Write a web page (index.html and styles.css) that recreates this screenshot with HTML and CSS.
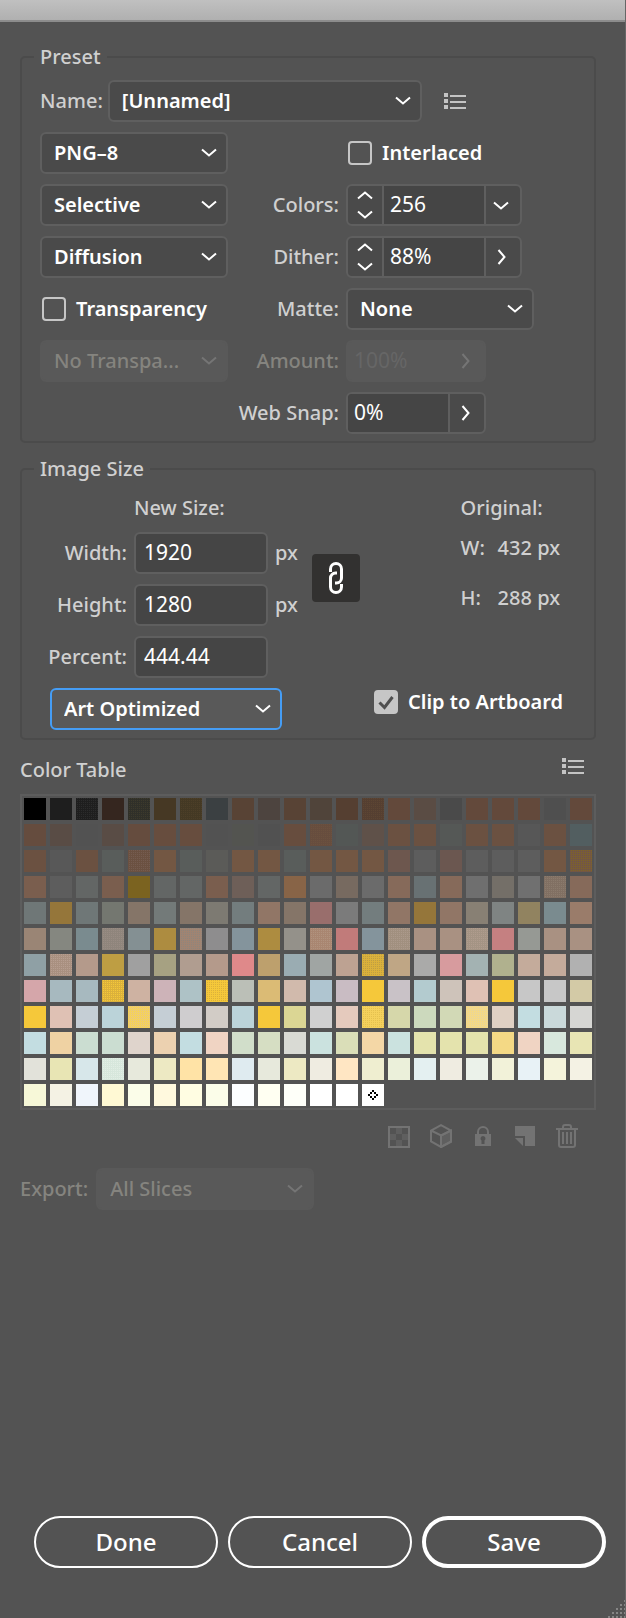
FILE: index.html
```html
<!DOCTYPE html>
<html lang="en">
<head>
<meta charset="utf-8">
<meta name="viewport" content="width=device-width, initial-scale=1">
<title>Save for Web</title>
<link rel="stylesheet" href="styles.css">
</head>
<body>
<svg class="defs" width="0" height="0" aria-hidden="true">
  <symbol id="down" viewBox="0 0 16 9"><path d="M1 1.5l7 6 7-6" fill="none" stroke="currentColor" stroke-width="2"/></symbol>
  <symbol id="up" viewBox="0 0 16 9"><path d="M1 7.5l7-6 7 6" fill="none" stroke="currentColor" stroke-width="2"/></symbol>
  <symbol id="right" viewBox="0 0 9 16"><path d="M1.500 1l6 7-6 7" fill="none" stroke="currentColor" stroke-width="2"/></symbol>
  <symbol id="list" viewBox="0 0 22 16"><path d="M0 0h4v4H0zM0 6h4v4H0zM0 12h4v4H0zM6 2h16v2H6zM6 8h16v2H6zM6 14h16v2H6z" fill="currentColor"/></symbol>
</svg>
<div class="titlebar"></div>
<main class="panel">
  <fieldset class="group preset">
    <legend>Preset</legend>
    <div class="name-row">
      <label for="name">Name:</label>
      <span class="select name-select"><select id="name"><option>[Unnamed]</option></select><svg class="chev"><use href="#down"/></svg></span>
      <button class="icon-btn" type="button" aria-label="Preset menu"><svg width="22" height="16"><use href="#list"/></svg></button>
    </div>
    <div class="preset-grid">
      <span class="select"><select aria-label="Format"><option>PNG–8</option></select><svg class="chev"><use href="#down"/></svg></span>
      <label class="check wide"><input type="checkbox"><span>Interlaced</span></label>

      <span class="select"><select aria-label="Color reduction"><option>Selective</option></select><svg class="chev"><use href="#down"/></svg></span>
      <label class="lbl" for="colors">Colors:</label>
      <div class="combo">
        <span class="stepper"><button type="button" aria-label="More colors"><svg width="16" height="9"><use href="#up"/></svg></button><button type="button" aria-label="Fewer colors"><svg width="16" height="9"><use href="#down"/></svg></button></span>
        <input id="colors" type="text" value="256">
        <button class="side" type="button" aria-label="Color counts"><svg width="16" height="9"><use href="#down"/></svg></button>
      </div>

      <span class="select"><select aria-label="Dither method"><option>Diffusion</option></select><svg class="chev"><use href="#down"/></svg></span>
      <label class="lbl" for="dither">Dither:</label>
      <div class="combo">
        <span class="stepper"><button type="button" aria-label="More dither"><svg width="16" height="9"><use href="#up"/></svg></button><button type="button" aria-label="Less dither"><svg width="16" height="9"><use href="#down"/></svg></button></span>
        <input id="dither" type="text" value="88%">
        <button class="side" type="button" aria-label="Dither slider"><svg width="9" height="16"><use href="#right"/></svg></button>
      </div>

      <label class="check"><input type="checkbox"><span>Transparency</span></label>
      <label class="lbl" for="matte">Matte:</label>
      <span class="select matte"><select id="matte"><option>None</option></select><svg class="chev"><use href="#down"/></svg></span>

      <span class="select off"><select aria-label="Transparency dither" disabled><option>No Transpa...</option></select><svg class="chev"><use href="#down"/></svg></span>
      <label class="lbl dim" for="amount">Amount:</label>
      <div class="combo off">
        <input id="amount" type="text" value="100%" disabled>
        <button class="side" type="button" aria-label="Amount slider" disabled><svg width="9" height="16"><use href="#right"/></svg></button>
      </div>

      <label class="lbl snap" for="snap">Web Snap:</label>
      <div class="combo">
        <input id="snap" type="text" value="0%">
        <button class="side" type="button" aria-label="Web snap slider"><svg width="9" height="16"><use href="#right"/></svg></button>
      </div>
    </div>
  </fieldset>

  <fieldset class="group size">
    <legend>Image Size</legend>
    <div class="size-body">
      <div class="size-grid">
        <span class="head">New Size:</span>
        <label for="w">Width:</label><input id="w" class="field" type="text" value="1920"><span class="unit">px</span>
        <label for="h">Height:</label><input id="h" class="field" type="text" value="1280"><span class="unit">px</span>
        <label for="p">Percent:</label><input id="p" class="field" type="text" value="444.44">
      </div>
      <button class="link" type="button" aria-label="Constrain proportions">
        <svg width="16" height="34" viewBox="0 0 16 34" fill="none" stroke="#fff" stroke-width="3"><path d="M2.500 11V8a5.500 5.500 0 0 1 11 0v9a5 5 0 0 1-5 5H7"/><path d="M13.500 23v3a5.500 5.500 0 0 1-11 0v-9a5 5 0 0 1 5-5H9"/></svg>
      </button>
      <dl class="original">
        <dt class="orig-title">Original:</dt>
        <dt>W:</dt><dd>432 px</dd>
        <dt>H:</dt><dd>288 px</dd>
      </dl>
    </div>
    <div class="size-foot">
      <span class="select focus"><select aria-label="Resampling"><option>Art Optimized</option></select><svg class="chev"><use href="#down"/></svg></span>
      <label class="check clip"><input type="checkbox" checked><span>Clip to Artboard</span></label>
    </div>
  </fieldset>

  <section class="table">
    <header class="table-head">
      <h2>Color Table</h2>
      <button class="icon-btn" type="button" aria-label="Color table menu"><svg width="22" height="16"><use href="#list"/></svg></button>
    </header>
    <div class="swatches" id="swatches"></div>
    <div class="tools">
      <button type="button" aria-label="Map to transparent" disabled><svg width="22" height="24" viewBox="0 0 22 24"><path d="M1 3h20v20H1z" fill="none" stroke="currentColor" stroke-width="2"/><path d="M8 4h6v6H8zM2 10h6v6H2zM14 10h6v6h-6zM8 16h6v6H8z" fill="#5f5f5f"/></svg></button>
      <button type="button" aria-label="Shift to web palette" disabled><svg width="22" height="24" viewBox="0 0 22 24" fill="none" stroke="currentColor" stroke-width="2"><path d="M11 11.500V23l10-5V6.500z" fill="#5f5f5f"/><path d="M11 1.200l10 5.300v11L11 23 1 17.500v-11zM1 6.500l10 5 10-5"/></svg></button>
      <button type="button" aria-label="Lock color" disabled><svg width="16" height="24" viewBox="0 0 16 24"><path d="M3 11V8a5 5 0 0 1 10 0v3" fill="none" stroke="currentColor" stroke-width="2"/><path fill-rule="evenodd" d="M0 10h16v12H0zM8 12a2.500 2.500 0 0 0-1.500 4.500V20h3v-3.500A2.500 2.500 0 0 0 8 12z" fill="currentColor"/></svg></button>
      <button type="button" aria-label="New color" disabled><svg width="20" height="24" viewBox="0 0 20 24"><path d="M0 2h20v20H10V12H0zM0 14h8v8z" fill="currentColor"/></svg></button>
      <button type="button" aria-label="Delete color" disabled><svg width="22" height="24" viewBox="0 0 22 24" fill="none" stroke="currentColor" stroke-width="2"><path d="M0 5h22M7 5V3q0-2 2-2h4q2 0 2 2v2M3 6v15q0 2 2 2h12q2 0 2-2V6M7 8v12M11 8v12M15 8v12"/></svg></button>
    </div>
  </section>

  <div class="export">
    <label class="dim" for="export">Export:</label>
    <span class="select off"><select id="export" disabled><option>All Slices</option></select><svg class="chev"><use href="#down"/></svg></span>
  </div>

  <footer class="actions">
    <button type="button">Done</button>
    <button type="button">Cancel</button>
    <button class="primary" type="button">Save</button>
  </footer>
</main>
<svg class="grip" width="18" height="18" viewBox="0 0 18 18" aria-hidden="true"><path d="M1 17h18M5 13h14M9 9h10M13 5h6M17 1h2" stroke="#858585" stroke-width="2" stroke-dasharray="2 2"/></svg>
<script src="swatches.js"></script>
</body>
</html>
```

FILE: styles.css
```css
* { box-sizing: border-box; }

body {
  margin: 0;
  min-height: 100vh;
  display: flex;
  flex-direction: column;
  position: relative;
  background: #535353;
  border-right: 1px solid #666;
  color: #d0d0d0;
  font: 500 20px/28px "Noto Sans", "Open Sans", sans-serif;
}

.defs { position: absolute; }

button, input, select { font: inherit; color: #fff; margin: 0; }

button {
  display: flex;
  align-items: center;
  justify-content: center;
  padding: 0;
  border: 0;
  background: none;
}

svg { display: block; }

.titlebar {
  height: 22px;
  background: linear-gradient(#c0c0c0, #b0b0b0);
  border-bottom: 2px solid #8c8c8c;
}

.panel {
  flex: 1;
  display: flex;
  flex-direction: column;
  padding: 21px 29px 50px 20px;
}

.group {
  margin: 0;
  min-width: 0;
  border: 2px solid #4b4b4b;
  border-radius: 5px;
}

.group legend { margin-left: -6px; padding: 0 6px; }

.preset { padding: 9px 18px 7px; }
.size { margin-top: 12px; padding: 11px 18px 8px; }

/* Drop-downs */
.select { position: relative; display: block; }

.select select {
  display: block;
  width: 100%;
  height: 42px;
  padding: 0 32px 0 12px;
  appearance: none;
  border: 2px solid #5f5f5f;
  border-radius: 6px;
  background: #4a4a4a;
  font-weight: 600;
  opacity: 1;
}

.chev {
  position: absolute;
  right: 11px;
  top: 16px;
  width: 16px;
  height: 9px;
  color: #fff;
  pointer-events: none;
}

.select.off select { border-color: #595959; background: #595959; color: #85847f; font-weight: 500; }
.combo.off { border-color: #595959; background: #595959; }
.off .chev, .off .side { color: #757575; }
.select.focus select { border-color: #459df5; background: #595959; }
.dim { color: #85847f; }

/* Preset group */
.name-row { display: flex; align-items: center; }
.name-select { flex: 0 1 314px; margin: 0 22px 0 5px; }
.icon-btn { color: #c4c4c4; }

.preset-grid {
  display: grid;
  grid-template-columns: 188px 111px 1fr;
  gap: 10px 0;
  align-items: center;
  margin-top: 10px;
}

.lbl { text-align: right; }
.snap { grid-column: 1 / 3; }
.wide { grid-column: 2 / 4; padding-left: 120px; }
.matte { width: 188px; }
.matte, .combo { margin-left: 7px; }

.combo {
  display: flex;
  justify-self: start;
  height: 42px;
  border: 2px solid #5f5f5f;
  border-radius: 6px;
  background: #4a4a4a;
  overflow: hidden;
}

.combo input {
  width: 100px;
  padding: 0 6px 2px;
  border: 0;
  background: #454545;
  font-size: 21px;
  font-weight: 400;
}

.combo.off input { background: none; color: #666; }
.combo .side { width: 36px; padding-right: 4px; border-left: 2px solid #5f5f5f; }
.combo.off .side { border-color: transparent; }

.stepper {
  display: flex;
  flex-direction: column;
  width: 36px;
  border-right: 2px solid #5f5f5f;
}

.stepper button { flex: 1; }

/* Tick boxes */
.check { display: flex; align-items: center; gap: 10px; color: #fff; font-weight: 600; }
.preset-grid .check:not(.wide) { padding-left: 2px; }

.check input {
  flex: none;
  width: 24px;
  height: 24px;
  appearance: none;
  border: 2px solid #c6c6c6;
  border-radius: 4px;
}

.check input:checked {
  background: #c6c6c6 url("data:image/svg+xml,%3Csvg xmlns='http://www.w3.org/2000/svg' viewBox='0 0 20 20'%3E%3Cpath d='M3.500 10.500l5 5 8-10.500' fill='none' stroke='%234f4f4f' stroke-width='3'/%3E%3C/svg%3E");
}

/* Image size group */
.size-body { display: flex; align-items: flex-start; }

.size-grid {
  display: grid;
  grid-template-columns: 87px 134px 24px;
  gap: 10px 7px;
  align-items: center;
}

.size-grid label { text-align: right; }
.head { grid-column: 2 / 4; }

.field {
  width: 100%;
  height: 42px;
  padding: 0 8px 2px;
  border: 2px solid #5f5f5f;
  border-radius: 6px;
  background: #454545;
  font-size: 21px;
  font-weight: 400;
}

.link {
  width: 48px;
  height: 48px;
  margin: 60px 0 0 13px;
  border-radius: 4px;
  background: #323130;
}

.original {
  display: grid;
  grid-template-columns: 37px auto;
  margin: 0 16px 0 auto;
}

.orig-title { grid-column: 1 / 3; margin-bottom: 12px; }
.original dd { margin: 0 0 22px; }

.size-foot { display: flex; align-items: flex-start; margin-top: 10px; }
.focus { flex: 0 1 232px; margin-left: 10px; }
.clip { margin-left: 92px; }

/* Color table */
.table-head {
  display: flex;
  align-items: flex-start;
  justify-content: space-between;
  margin-top: 16px;
  padding-right: 12px;
}

.table-head h2 { margin: 0; font: inherit; }
.table-head .icon-btn { height: 20px; }

.swatches {
  display: grid;
  grid-template-columns: repeat(22, 22px);
  grid-auto-rows: 22px;
  gap: 4px;
  width: max-content;
  margin-top: 10px;
  padding: 2px;
  border: 2px solid #5d5d5d;
}

.swatch { display: flex; align-items: center; justify-content: center; }

.dots {
  background-image: conic-gradient(var(--dot) 25%, transparent 0);
  background-size: 2px 2px;
}

.tools {
  display: flex;
  justify-content: flex-end;
  gap: 20px;
  margin-top: 14px;
  padding-right: 18px;
}

.tools button { width: 22px; color: #737373; }

.export { display: flex; align-items: center; gap: 8px; margin-top: 20px; }
.export .select { flex: 0 1 218px; }

/* Dialog buttons */
.actions {
  display: grid;
  grid-template-columns: repeat(3, 1fr);
  gap: 10px;
  margin: auto -10px 0 14px;
}

.actions button {
  height: 52px;
  border: 2px solid #fff;
  border-radius: 26px;
  font-size: 24px;
}

.actions .primary { border-width: 4px; }

.grip { position: absolute; right: 0; bottom: 0; }
```

FILE: swatches.js
```js
// One row of the palette per line; "base/dot" marks a dithered entry.
const rows = [
  "000000 1e1e1e 1e1e1e/2b2b2b 35261f 303029/3d3a2c 463824 443924/4d3f28 3b4042 584335 4d443f 584335 50443a 553f31 553f31/5d4633 63493b 5a4c44 4a4a4a 63493b 63493b 63493b 4f4f4f 63493b",
  "654c3e 594c45 525252 594c45 654c3e 674d3e 674d3e 525252 535450 515151 674d3e 674d3e/6c523f 535755 5f5149 6b5141 6b5141 555856 6b5141 6b5141 575757 6b5141 525e60",
  "6b5141 585858 6b5141 595d5b 6b5141/755c50 735743 595d5b 5b5b58 735743 735743 595d5b 735743 735743 735743 6d574e 5d5d5d 6b5750 5d5d5d 5d5d5d 5d5d5d 735743 735743/806524",
  "7a5e4e 5d5d5d 636665 7a5e4e 7b6320 636665 636665 7a5e4e 6e5f58 636665 886447 6b6b6b 776a60 6b6b6b 866a5a 687173 866a5a 6f6f6f 746f68 707070 817063/8b7b6d 866a5a",
  "6f7777 95763a 6f7777 747770 857568 737a79 857568 7d7a72 737d7e 917666 857568 996e6c 7b7b7b 737d7e 917666 95763a 917666 888074 7f8483 918360 7a8b8f 9a7c6a",
  "9a8575 858780 7a8b8f 8f857c/998c84 849093 ad8c40 a08472/8f857c 8e8d8e 84949c ad8c40 94918a a98671/b1937f c17b7a 84949c a1907f/ac9a8c a99182 a99182 a49484/b09c8e c58081 969994 a99182 a99182",
  "8fa0a5 a99080/b79e91 b49a8b be9e43 a0a0a0 a6a182 b09d90 b49a8b df898a bda06d 9aacb2 a0a5a3 bda292 dbb13b/be9e43 bfa685 aaaaa9 d79b9e a3b2b2 b0b18e c4ab9b c4ab9b b1b1b1",
  "d5a6aa a7b9bf a7b9bf dbb13b/f5c83a ceb2a2 cdb3b8 aec2c6 f5c83a/dbb13b bbbfb7 dbbb75 d1baac afc5d0 c9bcc3 f5c83a c9c2c7 b3cbcf cec3ba dfc1b4 f5c83a c7c7c7 c7c7c7 d3caa6",
  "f5c83a dfc1b4 c5ced5 bbd3d9 f5d15c/e5c68a c5ced5 cfcdcf d2ccc6 bbd3d9 f5c83a dbd694 d0d0d0 e5cabd f5d15c/e5c14f d6d7aa ccd9bd d2d9b6 f5d985/e5d5a0 dfd0c3 c3dde1 cad9da d6d6d3",
  "c3dde1 efd2a3 cbddd1 cbddd1 dfd4cc ecd1b0 c3dde1 f0d4c3 d1deca d6dec3 d9dad4 cbe2df dadeb8 f4d7a6 cbe2df e4e3ad e4e3ad e4e3ad f4d985 f0d4c3 d8e8dd e8e5b4",
  "e2e2da e8e5b4 d7e7ea d7e7dc/e2eee5 e7e9dc ede9c3 ffe3a6 ffe5b4 dfebf0 e7e9dc ede9c3 efece1 ffe6c3 efeed0 ebf0da e4f0f1 efece1 ebf2ea f2f2d9 e8f2f6 f4f3db f4f2e4",
  "f7f8d8 f4f2e4 f0f5fb fff9d4 fbfde9 fff9de fffde2 fbfde9 fcfeff fffff2 fefff9 ffffff ffffff ffffff"
];
const box = document.getElementById("swatches");
rows.join(" ").split(" ").forEach(entry => {
  const [base, dot] = entry.split("/");
  const cell = document.createElement("span");
  cell.className = dot ? "swatch dots" : "swatch";
  cell.style.backgroundColor = "#" + base;
  if (dot) cell.style.setProperty("--dot", "#" + dot);
  box.append(cell);
});
// Web-safe marker on the last color.
box.lastChild.innerHTML = '<svg width="10" height="10" viewBox="0 0 10 10"><path d="M4 0h2v2H4zM2 2h2v2H2zM6 2h2v2H6zM0 4h2v2H0zM8 4h2v2H8zM2 6h2v2H2zM6 6h2v2H6zM4 8h2v2H4z"/></svg>';
```
